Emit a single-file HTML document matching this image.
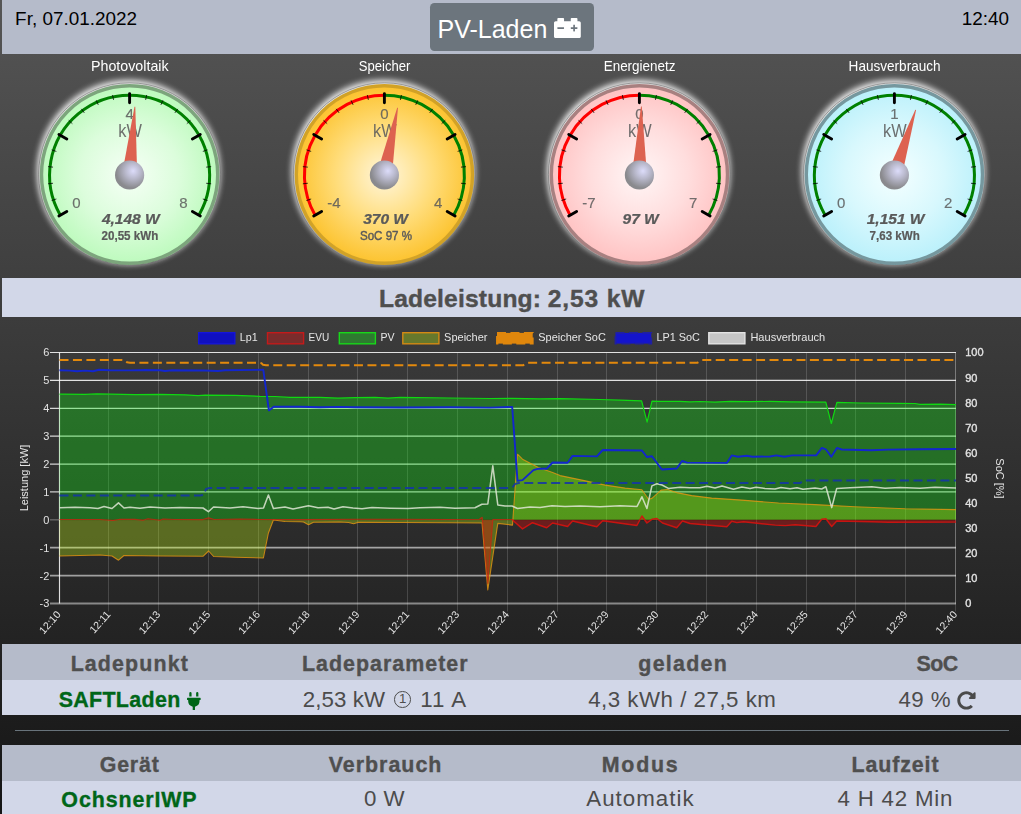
<!DOCTYPE html>
<html lang="de">
<head>
<meta charset="utf-8">
<title>openWB</title>
<style>
html,body{margin:0;padding:0}
body{width:1021px;height:814px;overflow:hidden;position:relative;
 background:linear-gradient(to bottom,#555555 0px,#151515 814px);
 font-family:"Liberation Sans", sans-serif;color:#4d4d4d}
.abs{position:absolute}
.band{position:absolute;left:2px;right:0}
.hdr{top:0;height:54px;background:#b5bbca}
.date{position:absolute;left:13.1px;top:8.2px;font-size:18.9px;line-height:22px;color:#000;white-space:nowrap}
.clock{position:absolute;right:11.9px;top:8.2px;font-size:18.9px;line-height:22px;color:#000;white-space:nowrap}
.btn{position:absolute;left:430px;top:3px;width:164px;height:48px;border-radius:4.5px;background:#6c757d;color:#fff;
 font-size:25px;line-height:48px;white-space:nowrap}
.btn span{position:absolute;left:7.5px;top:2.2px}
.btn .ico{position:absolute;left:124px;top:14.6px}
.lade{top:278px;height:39px;background:#d2d7e8;text-align:center;font-weight:bold;font-size:24.6px;line-height:39px;color:#4f4f4f;white-space:nowrap;letter-spacing:0.35px;-webkit-text-stroke:0.4px #4f4f4f}
.lade span{position:relative;top:0.9px;left:0.5px}
.th{background:#b5bbca;height:36px;font-weight:bold;font-size:23px;line-height:36px;color:#4f4f4f}
.tr{background:#d2d7e8;height:35px;font-size:22.5px;line-height:35px;color:#4c4c4c}
.row{position:absolute;left:2px;right:0;white-space:nowrap}
.cell{position:absolute;top:0;height:100%;text-align:center;transform:translateX(-50%);white-space:nowrap}
.tx{position:absolute;white-space:nowrap;line-height:30px}
.hb{font-weight:bold;font-size:21.4px;color:#4f4f4f;-webkit-text-stroke:0.35px #4f4f4f}
.gb{font-weight:bold;font-size:21.4px;color:#006618;-webkit-text-stroke:0.35px #006618}
.rt{font-size:22.3px;color:#4c4c4c}
.lb{font-weight:bold;font-size:24.6px;color:#4f4f4f;-webkit-text-stroke:0.4px #4f4f4f}
.ico{display:inline-block;vertical-align:baseline}
.circ{display:inline-block;box-sizing:border-box;width:16.6px;height:16.6px;border:1.4px solid #4c4c4c;border-radius:50%;
 font-size:13.2px;line-height:14px;text-align:center;vertical-align:baseline;position:relative;top:-0.6px;margin:0 3.2px 0 2.6px}
hr.sep{position:absolute;left:15px;width:994px;top:730px;height:1px;margin:0;border:0;background:#68737b}
</style>
</head>
<body>
<div class="band hdr">
  <div class="date">Fr, 07.01.2022</div>
  <div class="clock">12:40</div>
</div>
<div class="btn"><span>PV-Laden</span><svg class="ico" width="26.8" height="20.1" viewBox="0 64 512 384"><path fill="#fff" d="M480 128h-32V80c0-8.840-7.160-16-16-16h-96c-8.840 0-16 7.160-16 16v48H192V80c0-8.840-7.160-16-16-16H80c-8.840 0-16 7.160-16 16v48H32c-17.670 0-32 14.330-32 32v256c0 17.670 14.330 32 32 32h448c17.670 0 32-14.330 32-32V160c0-17.670-14.330-32-32-32zM192 264c0 4.420-3.580 8-8 8H72c-4.420 0-8-3.580-8-8v-16c0-4.420 3.580-8 8-8h112c4.420 0 8 3.580 8 8v16zm256 0c0 4.420-3.580 8-8 8h-40v40c0 4.420-3.580 8-8 8h-16c-4.420 0-8-3.580-8-8v-40h-40c-4.420 0-8-3.580-8-8v-16c0-4.420 3.580-8 8-8h40v-40c0-4.420 3.580-8 8-8h16c4.420 0 8 3.580 8 8v40h40c4.420 0 8 3.580 8 8v16z"/></svg></div>
<svg class="abs" style="left:0;top:0;will-change:transform" width="1021" height="280" viewBox="0 0 1021 280" font-family='"Liberation Sans", sans-serif'><defs><filter id="glow" x="-20%" y="-20%" width="140%" height="140%"><feGaussianBlur stdDeviation="3.4"/></filter></defs><radialGradient id="g1" cx="129.6" cy="175.0" r="90.0" gradientUnits="userSpaceOnUse"><stop offset="0" stop-color="#f6fff6"/><stop offset="0.55" stop-color="#dcfddc"/><stop offset="1" stop-color="#bcfabc"/></radialGradient>
<ellipse cx="128.6" cy="172.1" rx="91.6" ry="92.2" fill="#fff" opacity="0.95" filter="url(#glow)"/>
<ellipse cx="129.6" cy="174.5" rx="91.0" ry="91.7" fill="none" stroke="#707070" stroke-width="0.8" opacity="0.75"/>
<ellipse cx="129.6" cy="174.5" rx="89.8" ry="90.5" fill="url(#g1)"/>
<ellipse cx="129.6" cy="174.5" rx="88.1" ry="88.8" fill="none" stroke="rgba(0,0,0,0.34)" stroke-width="3.4"/>
<path d="M60.32 215.20 A80 80 0 1 1 198.88 215.20" fill="none" stroke="#008000" stroke-width="3"/>
<path d="M51.61 200.54L56.37 198.99M48.05 183.77L53.02 183.25M48.05 166.63L53.02 167.15M51.61 149.86L56.37 151.41M68.66 120.33L72.38 123.68M81.40 108.86L84.34 112.91M96.25 100.29L98.28 104.86M112.55 94.99L113.59 99.88M146.65 94.99L145.61 99.88M162.95 100.29L160.92 104.86M177.80 108.86L174.86 112.91M190.54 120.33L186.82 123.68M207.59 149.86L202.83 151.41M211.15 166.63L206.18 167.15M211.15 183.77L206.18 183.25M207.59 200.54L202.83 198.99" stroke="rgba(0,0,0,0.75)" stroke-width="1" fill="none"/>
<path d="M58.93 216.00L66.81 211.45M58.93 134.40L66.81 138.95M129.60 93.60L129.60 102.70M200.27 134.40L192.39 138.95M200.27 216.00L192.39 211.45" stroke="#000" stroke-width="2.9" stroke-linecap="round" fill="none"/>
<text x="76.3" y="207.8" font-size="15.0" fill="#5a5a5a" fill-opacity="0.85" stroke="#5a5a5a" stroke-opacity="0.85" stroke-width="0.15" text-anchor="middle">0</text>
<text x="129.6" y="119.3" font-size="15.0" fill="#5a5a5a" fill-opacity="0.85" stroke="#5a5a5a" stroke-opacity="0.85" stroke-width="0.15" text-anchor="middle">4</text>
<text x="183.4" y="207.8" font-size="15.0" fill="#5a5a5a" fill-opacity="0.85" stroke="#5a5a5a" stroke-opacity="0.85" stroke-width="0.15" text-anchor="middle">8</text>
<text x="130.1" y="136.9" font-size="17.5" fill="#5c5c5c" fill-opacity="0.88" text-anchor="middle" textLength="23.6" lengthAdjust="spacingAndGlyphs">kW</text>
<text transform="translate(130.79999999999998 224.3) scale(1.085 1)" font-size="14.3" font-weight="bold" font-style="italic" fill="#5a5a5a" stroke="#5a5a5a" stroke-width="0.25" text-anchor="middle">4,148 W</text>
<text transform="translate(129.9 239.5) scale(1 1.03)" font-size="11.6" font-weight="bold" fill="#5a5a5a" stroke="#5a5a5a" stroke-width="0.2" text-anchor="middle">20,55 kWh</text>
<g transform="translate(129.6 175.0) rotate(364.44)"><path d="M-7.6 0 L-0.4 -68.5 L0.4 -68.5 L7.6 0 Z" fill="#dd6250"/></g>
<radialGradient id="h1" cx="133.1" cy="171.0" r="17" gradientUnits="userSpaceOnUse"><stop offset="0" stop-color="#dcdcfa"/><stop offset="0.45" stop-color="#b9b9cc"/><stop offset="1" stop-color="#8a8a8e"/></radialGradient>
<circle cx="129.6" cy="175.0" r="14.6" fill="url(#h1)"/>
<text x="129.79999999999998" y="70.7" font-size="13.9" fill="#fff" text-anchor="middle" textLength="77.6" lengthAdjust="spacingAndGlyphs">Photovoltaik</text>
<radialGradient id="g2" cx="384.4" cy="175.0" r="90.0" gradientUnits="userSpaceOnUse"><stop offset="0" stop-color="#fff6dc"/><stop offset="0.55" stop-color="#ffdc78"/><stop offset="1" stop-color="#fcc22c"/></radialGradient>
<ellipse cx="383.4" cy="172.1" rx="91.6" ry="92.2" fill="#fff" opacity="0.95" filter="url(#glow)"/>
<ellipse cx="384.4" cy="174.5" rx="91.0" ry="91.7" fill="none" stroke="#707070" stroke-width="0.8" opacity="0.75"/>
<ellipse cx="384.4" cy="174.5" rx="89.8" ry="90.5" fill="url(#g2)"/>
<ellipse cx="384.4" cy="174.5" rx="88.1" ry="88.8" fill="none" stroke="rgba(0,0,0,0.17)" stroke-width="3.4"/>
<path d="M315.12 215.20 A80 80 0 0 1 384.40 95.20" fill="none" stroke="#ff0000" stroke-width="3"/>
<path d="M384.40 95.20 A80 80 0 0 1 453.68 215.20" fill="none" stroke="#008000" stroke-width="3"/>
<path d="M306.41 200.54L311.17 198.99M302.85 183.77L307.82 183.25M302.85 166.63L307.82 167.15M306.41 149.86L311.17 151.41M323.46 120.33L327.18 123.68M336.20 108.86L339.14 112.91M351.05 100.29L353.08 104.86M367.35 94.99L368.39 99.88M401.45 94.99L400.41 99.88M417.75 100.29L415.72 104.86M432.60 108.86L429.66 112.91M445.34 120.33L441.62 123.68M462.39 149.86L457.63 151.41M465.95 166.63L460.98 167.15M465.95 183.77L460.98 183.25M462.39 200.54L457.63 198.99" stroke="rgba(0,0,0,0.75)" stroke-width="1" fill="none"/>
<path d="M313.73 216.00L321.61 211.45M313.73 134.40L321.61 138.95M384.40 93.60L384.40 102.70M455.07 134.40L447.19 138.95M455.07 216.00L447.19 211.45" stroke="#000" stroke-width="2.9" stroke-linecap="round" fill="none"/>
<text x="334.0" y="207.8" font-size="15.0" fill="#5a5a5a" fill-opacity="0.85" stroke="#5a5a5a" stroke-opacity="0.85" stroke-width="0.15" text-anchor="middle">-4</text>
<text x="384.4" y="119.3" font-size="15.0" fill="#5a5a5a" fill-opacity="0.85" stroke="#5a5a5a" stroke-opacity="0.85" stroke-width="0.15" text-anchor="middle">0</text>
<text x="438.2" y="207.8" font-size="15.0" fill="#5a5a5a" fill-opacity="0.85" stroke="#5a5a5a" stroke-opacity="0.85" stroke-width="0.15" text-anchor="middle">4</text>
<text x="384.9" y="136.9" font-size="17.5" fill="#5c5c5c" fill-opacity="0.88" text-anchor="middle" textLength="23.6" lengthAdjust="spacingAndGlyphs">kW</text>
<text transform="translate(385.59999999999997 224.3) scale(1.085 1)" font-size="14.3" font-weight="bold" font-style="italic" fill="#5a5a5a" stroke="#5a5a5a" stroke-width="0.25" text-anchor="middle">370 W</text>
<text transform="translate(386.0 239.5) scale(1 1.03)" font-size="11.6" font-weight="normal" fill="#5a5a5a" stroke="#5a5a5a" stroke-width="0.4" text-anchor="middle">SoC 97 %</text>
<g transform="translate(384.4 175.0) rotate(371.10)"><path d="M-7.6 0 L-0.4 -68.5 L0.4 -68.5 L7.6 0 Z" fill="#dd6250"/></g>
<radialGradient id="h2" cx="387.9" cy="171.0" r="17" gradientUnits="userSpaceOnUse"><stop offset="0" stop-color="#dcdcfa"/><stop offset="0.45" stop-color="#b9b9cc"/><stop offset="1" stop-color="#8a8a8e"/></radialGradient>
<circle cx="384.4" cy="175.0" r="14.6" fill="url(#h2)"/>
<text x="384.59999999999997" y="70.7" font-size="13.9" fill="#fff" text-anchor="middle" textLength="51.6" lengthAdjust="spacingAndGlyphs">Speicher</text>
<radialGradient id="g3" cx="639.4" cy="175.0" r="90.0" gradientUnits="userSpaceOnUse"><stop offset="0" stop-color="#fff6f6"/><stop offset="0.55" stop-color="#ffdddd"/><stop offset="1" stop-color="#ffc2c2"/></radialGradient>
<ellipse cx="638.4" cy="172.1" rx="91.6" ry="92.2" fill="#fff" opacity="0.95" filter="url(#glow)"/>
<ellipse cx="639.4" cy="174.5" rx="91.0" ry="91.7" fill="none" stroke="#707070" stroke-width="0.8" opacity="0.75"/>
<ellipse cx="639.4" cy="174.5" rx="89.8" ry="90.5" fill="url(#g3)"/>
<ellipse cx="639.4" cy="174.5" rx="88.1" ry="88.8" fill="none" stroke="rgba(0,0,0,0.34)" stroke-width="3.4"/>
<path d="M570.12 215.20 A80 80 0 0 1 639.40 95.20" fill="none" stroke="#ff0000" stroke-width="3"/>
<path d="M639.40 95.20 A80 80 0 0 1 708.68 215.20" fill="none" stroke="#008000" stroke-width="3"/>
<path d="M561.41 200.54L566.17 198.99M557.85 183.77L562.82 183.25M557.85 166.63L562.82 167.15M561.41 149.86L566.17 151.41M578.46 120.33L582.18 123.68M591.20 108.86L594.14 112.91M606.05 100.29L608.08 104.86M622.35 94.99L623.39 99.88M656.45 94.99L655.41 99.88M672.75 100.29L670.72 104.86M687.60 108.86L684.66 112.91M700.34 120.33L696.62 123.68M717.39 149.86L712.63 151.41M720.95 166.63L715.98 167.15M720.95 183.77L715.98 183.25M717.39 200.54L712.63 198.99" stroke="rgba(0,0,0,0.75)" stroke-width="1" fill="none"/>
<path d="M568.73 216.00L576.61 211.45M568.73 134.40L576.61 138.95M639.40 93.60L639.40 102.70M710.07 134.40L702.19 138.95M710.07 216.00L702.19 211.45" stroke="#000" stroke-width="2.9" stroke-linecap="round" fill="none"/>
<text x="589.0" y="207.8" font-size="15.0" fill="#5a5a5a" fill-opacity="0.85" stroke="#5a5a5a" stroke-opacity="0.85" stroke-width="0.15" text-anchor="middle">-7</text>
<text x="639.4" y="119.3" font-size="15.0" fill="#5a5a5a" fill-opacity="0.85" stroke="#5a5a5a" stroke-opacity="0.85" stroke-width="0.15" text-anchor="middle">0</text>
<text x="693.2" y="207.8" font-size="15.0" fill="#5a5a5a" fill-opacity="0.85" stroke="#5a5a5a" stroke-opacity="0.85" stroke-width="0.15" text-anchor="middle">7</text>
<text x="639.9" y="136.9" font-size="17.5" fill="#5c5c5c" fill-opacity="0.88" text-anchor="middle" textLength="23.6" lengthAdjust="spacingAndGlyphs">kW</text>
<text transform="translate(640.6 224.3) scale(1.085 1)" font-size="14.3" font-weight="bold" font-style="italic" fill="#5a5a5a" stroke="#5a5a5a" stroke-width="0.25" text-anchor="middle">97 W</text>
<g transform="translate(639.4 175.0) rotate(361.66)"><path d="M-7.6 0 L-0.4 -68.5 L0.4 -68.5 L7.6 0 Z" fill="#dd6250"/></g>
<radialGradient id="h3" cx="642.9" cy="171.0" r="17" gradientUnits="userSpaceOnUse"><stop offset="0" stop-color="#dcdcfa"/><stop offset="0.45" stop-color="#b9b9cc"/><stop offset="1" stop-color="#8a8a8e"/></radialGradient>
<circle cx="639.4" cy="175.0" r="14.6" fill="url(#h3)"/>
<text x="639.6" y="70.7" font-size="13.9" fill="#fff" text-anchor="middle" textLength="71.8" lengthAdjust="spacingAndGlyphs">Energienetz</text>
<radialGradient id="g4" cx="894.4" cy="175.0" r="90.0" gradientUnits="userSpaceOnUse"><stop offset="0" stop-color="#f4ffff"/><stop offset="0.55" stop-color="#d8f8fd"/><stop offset="1" stop-color="#b9f0fb"/></radialGradient>
<ellipse cx="893.4" cy="172.1" rx="91.6" ry="92.2" fill="#fff" opacity="0.95" filter="url(#glow)"/>
<ellipse cx="894.4" cy="174.5" rx="91.0" ry="91.7" fill="none" stroke="#707070" stroke-width="0.8" opacity="0.75"/>
<ellipse cx="894.4" cy="174.5" rx="89.8" ry="90.5" fill="url(#g4)"/>
<ellipse cx="894.4" cy="174.5" rx="88.1" ry="88.8" fill="none" stroke="rgba(0,0,0,0.37)" stroke-width="3.4"/>
<path d="M825.12 215.20 A80 80 0 1 1 963.68 215.20" fill="none" stroke="#008000" stroke-width="3"/>
<path d="M816.41 200.54L821.17 198.99M812.85 183.77L817.82 183.25M812.85 166.63L817.82 167.15M816.41 149.86L821.17 151.41M833.46 120.33L837.18 123.68M846.20 108.86L849.14 112.91M861.05 100.29L863.08 104.86M877.35 94.99L878.39 99.88M911.45 94.99L910.41 99.88M927.75 100.29L925.72 104.86M942.60 108.86L939.66 112.91M955.34 120.33L951.62 123.68M972.39 149.86L967.63 151.41M975.95 166.63L970.98 167.15M975.95 183.77L970.98 183.25M972.39 200.54L967.63 198.99" stroke="rgba(0,0,0,0.75)" stroke-width="1" fill="none"/>
<path d="M823.73 216.00L831.61 211.45M823.73 134.40L831.61 138.95M894.40 93.60L894.40 102.70M965.07 134.40L957.19 138.95M965.07 216.00L957.19 211.45" stroke="#000" stroke-width="2.9" stroke-linecap="round" fill="none"/>
<text x="841.1" y="207.8" font-size="15.0" fill="#5a5a5a" fill-opacity="0.85" stroke="#5a5a5a" stroke-opacity="0.85" stroke-width="0.15" text-anchor="middle">0</text>
<text x="894.4" y="119.3" font-size="15.0" fill="#5a5a5a" fill-opacity="0.85" stroke="#5a5a5a" stroke-opacity="0.85" stroke-width="0.15" text-anchor="middle">1</text>
<text x="948.2" y="207.8" font-size="15.0" fill="#5a5a5a" fill-opacity="0.85" stroke="#5a5a5a" stroke-opacity="0.85" stroke-width="0.15" text-anchor="middle">2</text>
<text x="894.9" y="136.9" font-size="17.5" fill="#5c5c5c" fill-opacity="0.88" text-anchor="middle" textLength="23.6" lengthAdjust="spacingAndGlyphs">kW</text>
<text transform="translate(895.6 224.3) scale(1.085 1)" font-size="14.3" font-weight="bold" font-style="italic" fill="#5a5a5a" stroke="#5a5a5a" stroke-width="0.25" text-anchor="middle">1,151 W</text>
<text transform="translate(894.6999999999999 239.5) scale(1 1.03)" font-size="11.6" font-weight="bold" fill="#5a5a5a" stroke="#5a5a5a" stroke-width="0.2" text-anchor="middle">7,63 kWh</text>
<g transform="translate(894.4 175.0) rotate(378.12)"><path d="M-7.6 0 L-0.4 -68.5 L0.4 -68.5 L7.6 0 Z" fill="#dd6250"/></g>
<radialGradient id="h4" cx="897.9" cy="171.0" r="17" gradientUnits="userSpaceOnUse"><stop offset="0" stop-color="#dcdcfa"/><stop offset="0.45" stop-color="#b9b9cc"/><stop offset="1" stop-color="#8a8a8e"/></radialGradient>
<circle cx="894.4" cy="175.0" r="14.6" fill="url(#h4)"/>
<text x="894.6" y="70.7" font-size="13.9" fill="#fff" text-anchor="middle" textLength="92.0" lengthAdjust="spacingAndGlyphs">Hausverbrauch</text></svg>
<div class="band lade"></div>
<svg class="abs" style="left:0;top:318px;will-change:transform" width="1021" height="326" viewBox="0 318 1021 326" font-family='"Liberation Sans", sans-serif' font-size="11">
<path d="M108.5 352.5V611.5M158.5 352.5V611.5M208.5 352.5V611.5M258.5 352.5V611.5M308.5 352.5V611.5M357.5 352.5V611.5M407.5 352.5V611.5M457.5 352.5V611.5M507.5 352.5V611.5M557.5 352.5V611.5M606.5 352.5V611.5M656.5 352.5V611.5M706.5 352.5V611.5M756.5 352.5V611.5M806.5 352.5V611.5M855.5 352.5V611.5M905.5 352.5V611.5M955.5 352.5V611.5" stroke="rgba(255,255,255,0.155)" stroke-width="1" fill="none"/>
<path d="M955.5 352.5V603.5" stroke="rgba(255,255,255,0.22)" stroke-width="1" fill="none"/>
<path d="M50.0 352.50H956.0" stroke="rgba(255,255,255,0.85)" stroke-width="1.15" fill="none"/>
<path d="M50.0 380.39H956.0" stroke="rgba(255,255,255,0.85)" stroke-width="1.2" fill="none"/>
<path d="M50.0 408.28H956.0" stroke="rgba(255,255,255,0.8)" stroke-width="1.25" fill="none"/>
<path d="M50.0 436.17H956.0" stroke="rgba(255,255,255,0.8)" stroke-width="1.25" fill="none"/>
<path d="M50.0 464.06H956.0" stroke="rgba(255,255,255,0.78)" stroke-width="1.3" fill="none"/>
<path d="M50.0 491.94H956.0" stroke="rgba(255,255,255,0.76)" stroke-width="1.3" fill="none"/>
<path d="M50.0 519.83H59.5" stroke="rgba(255,255,255,0.3)" stroke-width="1.3" fill="none"/>
<path d="M59.5 519.83H956.0" stroke="rgba(0,0,0,0.25)" stroke-width="1.2" fill="none"/>
<path d="M50.0 547.72H956.0" stroke="rgba(255,255,255,0.58)" stroke-width="1.75" fill="none"/>
<path d="M50.0 575.61H956.0" stroke="rgba(255,255,255,0.56)" stroke-width="1.8" fill="none"/>
<path d="M50.0 603.50H956.0" stroke="rgba(255,255,255,0.46)" stroke-width="1.8" fill="none"/>
<path d="M59.5 352.5V603.5" stroke="rgba(255,255,255,0.85)" stroke-width="1.15" fill="none"/>
<polygon points="59.5,519.8 59.5,394.2 85.0,394.4 97.0,393.9 110.0,394.2 135.0,394.6 160.0,394.4 185.0,394.8 198.0,395.6 205.0,395.2 235.0,395.4 260.0,396.3 275.0,396.5 290.0,397.4 320.0,397.3 338.0,398.2 355.0,397.6 375.0,397.3 388.0,398.1 400.0,397.4 450.0,398.0 490.0,398.5 513.0,398.4 540.0,398.9 560.0,398.6 600.0,399.5 620.0,400.2 641.6,400.8 647.1,422.2 652.0,401.1 660.0,401.4 680.0,401.3 690.0,401.9 700.0,401.5 715.0,402.1 730.0,401.3 750.0,401.6 770.0,401.4 790.0,401.8 825.8,402.2 831.3,423.5 836.9,402.4 860.0,403.0 900.0,403.3 915.0,403.5 920.0,404.3 940.0,404.1 956.0,404.6 956.0,519.8" fill="rgba(10,255,13,0.3)"/>
<polygon points="59.5,519.8 59.5,556.0 80.0,555.5 100.0,555.0 112.0,556.0 118.5,560.2 124.0,555.5 160.0,556.0 203.0,556.3 208.6,551.0 213.6,556.5 235.0,557.2 263.4,558.0 268.4,533.0 273.4,520.0 285.0,521.5 300.0,521.8 303.5,522.0 308.5,524.8 313.5,522.3 340.0,522.0 348.6,522.5 353.6,523.8 358.6,522.3 400.0,522.5 450.0,522.8 482.0,523.0 487.8,589.9 492.8,556.5 497.8,523.4 512.5,525.1 517.5,454.2 522.5,459.2 538.4,467.5 552.6,472.6 560.1,475.6 581.8,480.1 605.2,485.1 625.2,488.1 641.9,489.8 648.6,499.3 651.9,498.4 661.1,490.1 667.5,489.6 676.7,492.6 691.7,495.6 711.8,498.1 741.8,500.1 778.6,503.0 815.0,504.6 855.0,506.8 905.0,508.8 956.0,509.6 956.0,519.8" fill="rgba(200,255,13,0.3)"/>
<polygon points="59.5,519.8 59.5,519.5 100.0,519.5 113.0,520.5 120.0,519.2 135.0,519.4 143.0,520.3 148.0,518.8 160.0,520.2 163.0,519.0 175.0,519.5 203.0,519.6 208.6,517.8 214.0,519.5 240.0,519.0 260.0,519.5 300.0,519.6 355.0,519.3 400.0,519.3 450.0,519.5 479.4,519.3 482.2,517.3 487.8,583.5 492.8,519.6 512.5,519.5 513.3,520.7 522.5,528.9 532.5,522.7 546.7,527.7 552.6,523.0 567.6,526.5 572.6,521.0 596.8,526.8 602.7,520.7 636.9,525.5 641.9,516.0 646.9,523.0 651.9,519.3 656.9,518.5 662.5,523.0 676.7,527.7 682.5,521.0 690.0,523.5 726.8,526.8 731.8,521.3 736.8,522.6 743.5,521.8 775.2,525.1 785.2,525.6 795.2,524.8 815.9,526.5 821.7,519.3 825.9,518.8 831.7,526.5 836.7,521.0 871.8,521.8 888.5,522.3 956.0,522.1 956.0,519.8" fill="rgba(255,0,0,0.3)"/>
<polyline points="59.5,394.2 85.0,394.4 97.0,393.9 110.0,394.2 135.0,394.6 160.0,394.4 185.0,394.8 198.0,395.6 205.0,395.2 235.0,395.4 260.0,396.3 275.0,396.5 290.0,397.4 320.0,397.3 338.0,398.2 355.0,397.6 375.0,397.3 388.0,398.1 400.0,397.4 450.0,398.0 490.0,398.5 513.0,398.4 540.0,398.9 560.0,398.6 600.0,399.5 620.0,400.2 641.6,400.8 647.1,422.2 652.0,401.1 660.0,401.4 680.0,401.3 690.0,401.9 700.0,401.5 715.0,402.1 730.0,401.3 750.0,401.6 770.0,401.4 790.0,401.8 825.8,402.2 831.3,423.5 836.9,402.4 860.0,403.0 900.0,403.3 915.0,403.5 920.0,404.3 940.0,404.1 956.0,404.6" fill="none" stroke="#10d812" stroke-width="1.2" stroke-linejoin="round"/>
<polyline points="59.5,556.0 80.0,555.5 100.0,555.0 112.0,556.0 118.5,560.2 124.0,555.5 160.0,556.0 203.0,556.3 208.6,551.0 213.6,556.5 235.0,557.2 263.4,558.0 268.4,533.0 273.4,520.0 285.0,521.5 300.0,521.8 303.5,522.0 308.5,524.8 313.5,522.3 340.0,522.0 348.6,522.5 353.6,523.8 358.6,522.3 400.0,522.5 450.0,522.8 482.0,523.0 487.8,589.9 492.8,556.5 497.8,523.4 512.5,525.1 517.5,454.2 522.5,459.2 538.4,467.5 552.6,472.6 560.1,475.6 581.8,480.1 605.2,485.1 625.2,488.1 641.9,489.8 648.6,499.3 651.9,498.4 661.1,490.1 667.5,489.6 676.7,492.6 691.7,495.6 711.8,498.1 741.8,500.1 778.6,503.0 815.0,504.6 855.0,506.8 905.0,508.8 956.0,509.6" fill="none" stroke="rgba(235,150,18,0.78)" stroke-width="1.1" stroke-linejoin="round"/>
<polyline points="59.5,519.5 100.0,519.5 113.0,520.5 120.0,519.2 135.0,519.4 143.0,520.3 148.0,518.8 160.0,520.2 163.0,519.0 175.0,519.5 203.0,519.6 208.6,517.8 214.0,519.5 240.0,519.0 260.0,519.5 300.0,519.6 355.0,519.3 400.0,519.3 450.0,519.5 479.4,519.3 482.2,517.3 487.8,583.5 492.8,519.6 512.5,519.5" fill="none" stroke="rgba(205,35,15,0.75)" stroke-width="1.1" stroke-linejoin="round"/>
<polyline points="512.5,519.5 513.3,520.7 522.5,528.9 532.5,522.7 546.7,527.7 552.6,523.0 567.6,526.5 572.6,521.0 596.8,526.8 602.7,520.7 636.9,525.5 641.9,516.0 646.9,523.0 651.9,519.3 656.9,518.5 662.5,523.0 676.7,527.7 682.5,521.0 690.0,523.5 726.8,526.8 731.8,521.3 736.8,522.6 743.5,521.8 775.2,525.1 785.2,525.6 795.2,524.8 815.9,526.5 821.7,519.3 825.9,518.8 831.7,526.5 836.7,521.0 871.8,521.8 888.5,522.3 956.0,522.1" fill="none" stroke="rgba(214,18,14,0.9)" stroke-width="1.45" stroke-linejoin="round"/>
<polyline points="59.5,507.8 75.0,507.2 90.0,507.8 98.0,508.5 104.0,506.5 112.0,508.5 118.5,502.9 124.0,508.0 130.0,507.2 140.0,508.3 150.0,507.0 165.0,508.0 180.0,507.5 203.0,508.0 208.4,511.7 213.5,507.0 230.0,508.0 243.0,506.8 258.0,508.4 263.5,508.0 268.4,495.0 273.4,508.6 285.0,507.0 293.0,509.0 308.5,505.8 318.0,507.8 328.0,507.2 334.0,509.0 343.0,506.8 353.0,508.0 362.0,508.8 372.0,507.5 390.0,508.2 408.0,508.6 420.0,507.8 440.0,507.3 455.0,508.2 475.0,507.8 481.9,504.2 487.8,504.0 492.8,465.8 497.8,505.0 505.0,506.0 512.0,506.0 517.5,508.5 530.0,507.0 540.0,507.6 552.0,505.8 565.0,506.5 580.0,506.0 600.0,506.8 620.0,505.8 637.0,506.5 641.9,496.8 646.9,508.5 651.9,485.9 656.9,483.8 662.0,485.0 668.4,488.4 680.0,487.2 690.0,487.8 700.0,487.8 707.0,486.2 715.0,488.0 722.0,486.0 733.5,489.3 741.8,487.1 750.0,488.6 756.0,487.3 765.0,488.4 775.0,489.0 781.0,487.6 790.0,488.7 797.0,487.8 803.0,489.2 815.0,488.0 821.7,489.0 825.9,486.8 831.7,507.6 836.7,488.4 850.0,487.8 871.8,486.8 885.0,488.2 900.0,487.6 920.0,488.2 935.0,487.2 956.0,487.9" fill="none" stroke="rgba(226,232,216,0.84)" stroke-width="1.55" stroke-linejoin="round"/>
<polyline points="59.5,495.6 200.0,495.6 203.5,495.0 206.0,489.0 209.5,487.9 508.0,487.9 512.5,487.3 515.0,484.0 518.4,483.1 800.3,483.1 802.5,481.2 806.1,480.4 956.0,480.4" fill="none" stroke="rgba(20,52,172,0.85)" stroke-width="2" stroke-dasharray="9 4.45" stroke-linejoin="round"/>
<polyline points="59.5,360.1 122.0,360.1 125.5,360.6 127.0,362.2 130.0,362.8 259.3,362.8 261.5,363.3 263.0,364.7 266.0,365.2 523.4,365.2 527.4,362.8 697.3,362.8 702.1,360.1 956.0,360.1" fill="none" stroke="#e3890c" stroke-width="2" stroke-dasharray="9 4.45" stroke-linejoin="round"/>
<polyline points="59.5,370.3 70.0,370.6 77.0,371.3 85.0,370.6 93.0,371.2 99.0,369.8 110.0,370.3 130.0,370.4 145.0,370.0 160.0,370.3 165.0,371.0 172.0,370.2 205.0,370.5 218.0,371.0 225.0,370.2 263.3,369.8 268.9,410.4 273.7,406.7 300.0,406.8 320.0,407.2 340.0,406.9 355.0,407.2 400.0,407.5 450.0,407.2 490.0,407.6 512.2,407.0 517.5,480.9 522.5,480.1 533.4,470.1 538.4,468.7 546.7,468.7 552.6,462.5 567.6,462.7 572.6,455.9 596.8,456.4 602.7,450.0 641.9,450.5 646.9,457.0 651.9,456.2 661.9,469.5 676.6,468.5 682.1,461.0 687.0,462.6 726.9,462.9 731.7,455.4 738.0,456.7 746.8,455.7 752.4,456.7 770.0,456.5 776.4,455.4 784.3,456.7 792.3,455.4 816.2,455.4 821.8,447.9 825.8,449.3 831.3,456.7 836.9,447.9 841.7,449.5 871.3,450.3 888.0,449.6 920.0,449.3 956.0,449.0" fill="none" stroke="#1226cf" stroke-width="1.9" stroke-linejoin="round"/>
<rect x="198.7" y="332.7" width="36.1" height="11.1" fill="#1010c0" stroke="#1515d8" stroke-width="1.4"/>
<text x="239.8" y="341.2" fill="#e6e6e6" textLength="17.9" lengthAdjust="spacingAndGlyphs">Lp1</text>
<rect x="267.5" y="332.7" width="36.1" height="11.1" fill="#7a2c2c" stroke="#c41a1a" stroke-width="1.4"/>
<text x="308.6" y="341.2" fill="#e6e6e6" textLength="20.6" lengthAdjust="spacingAndGlyphs">EVU</text>
<rect x="339.3" y="332.7" width="36.1" height="11.1" fill="#2e7a30" stroke="#18d81a" stroke-width="1.4"/>
<text x="380.5" y="341.2" fill="#e6e6e6" textLength="14.1" lengthAdjust="spacingAndGlyphs">PV</text>
<rect x="402.8" y="332.7" width="36.1" height="11.1" fill="#66782c" stroke="#d48a14" stroke-width="1.4"/>
<text x="444.1" y="341.2" fill="#e6e6e6" textLength="43.4" lengthAdjust="spacingAndGlyphs">Speicher</text>
<rect x="497.0" y="332.9" width="35.7" height="10.7" fill="#e0870c"/>
<rect x="497.0" y="332.9" width="35.7" height="10.7" fill="none" stroke="#e0870c" stroke-width="1.9" stroke-dasharray="9 4.45"/>
<text x="538.3" y="341.2" fill="#e6e6e6" textLength="67.5" lengthAdjust="spacingAndGlyphs">Speicher SoC</text>
<rect x="615.5" y="332.9" width="35.7" height="10.7" fill="#1414cc"/>
<rect x="615.5" y="332.9" width="35.7" height="10.7" fill="none" stroke="#2020a0" stroke-width="1.9" stroke-dasharray="9 4.45"/>
<text x="656.4" y="341.2" fill="#e6e6e6" textLength="43.5" lengthAdjust="spacingAndGlyphs">LP1 SoC</text>
<rect x="708.8000000000001" y="332.7" width="36.1" height="11.1" fill="#c6c6c6" stroke="#e4e4e4" stroke-width="1.4"/>
<text x="750.4" y="341.2" fill="#e6e6e6" textLength="74.8" lengthAdjust="spacingAndGlyphs">Hausverbrauch</text>
<text x="49.4" y="356.4" fill="#e2e2e2" text-anchor="end">6</text>
<text x="49.4" y="384.3" fill="#e2e2e2" text-anchor="end">5</text>
<text x="49.4" y="412.2" fill="#e2e2e2" text-anchor="end">4</text>
<text x="49.4" y="440.1" fill="#e2e2e2" text-anchor="end">3</text>
<text x="49.4" y="468.0" fill="#e2e2e2" text-anchor="end">2</text>
<text x="49.4" y="495.8" fill="#e2e2e2" text-anchor="end">1</text>
<text x="49.4" y="523.7" fill="#e2e2e2" text-anchor="end">0</text>
<text x="49.4" y="551.6" fill="#e2e2e2" text-anchor="end">-1</text>
<text x="49.4" y="579.5" fill="#e2e2e2" text-anchor="end">-2</text>
<text x="49.4" y="607.4" fill="#e2e2e2" text-anchor="end">-3</text>
<text x="965.2" y="356.4" fill="#e2e2e2" stroke="#e2e2e2" stroke-width="0.35">100</text>
<text x="965.2" y="381.5" fill="#e2e2e2" stroke="#e2e2e2" stroke-width="0.35">90</text>
<text x="965.2" y="406.6" fill="#e2e2e2" stroke="#e2e2e2" stroke-width="0.35">80</text>
<text x="965.2" y="431.7" fill="#e2e2e2" stroke="#e2e2e2" stroke-width="0.35">70</text>
<text x="965.2" y="456.8" fill="#e2e2e2" stroke="#e2e2e2" stroke-width="0.35">60</text>
<text x="965.2" y="481.9" fill="#e2e2e2" stroke="#e2e2e2" stroke-width="0.35">50</text>
<text x="965.2" y="507.0" fill="#e2e2e2" stroke="#e2e2e2" stroke-width="0.35">40</text>
<text x="965.2" y="532.1" fill="#e2e2e2" stroke="#e2e2e2" stroke-width="0.35">30</text>
<text x="965.2" y="557.2" fill="#e2e2e2" stroke="#e2e2e2" stroke-width="0.35">20</text>
<text x="965.2" y="582.3" fill="#e2e2e2" stroke="#e2e2e2" stroke-width="0.35">10</text>
<text x="965.2" y="607.4" fill="#e2e2e2" stroke="#e2e2e2" stroke-width="0.35">0</text>
<text transform="translate(61.4 614.8) rotate(-48.5)" fill="#e2e2e2" font-size="10.6" text-anchor="end">12:10</text>
<text transform="translate(111.2 614.8) rotate(-48.5)" fill="#e2e2e2" font-size="10.6" text-anchor="end">12:11</text>
<text transform="translate(161.0 614.8) rotate(-48.5)" fill="#e2e2e2" font-size="10.6" text-anchor="end">12:13</text>
<text transform="translate(210.8 614.8) rotate(-48.5)" fill="#e2e2e2" font-size="10.6" text-anchor="end">12:15</text>
<text transform="translate(260.6 614.8) rotate(-48.5)" fill="#e2e2e2" font-size="10.6" text-anchor="end">12:16</text>
<text transform="translate(310.4 614.8) rotate(-48.5)" fill="#e2e2e2" font-size="10.6" text-anchor="end">12:18</text>
<text transform="translate(360.2 614.8) rotate(-48.5)" fill="#e2e2e2" font-size="10.6" text-anchor="end">12:19</text>
<text transform="translate(410.0 614.8) rotate(-48.5)" fill="#e2e2e2" font-size="10.6" text-anchor="end">12:21</text>
<text transform="translate(459.8 614.8) rotate(-48.5)" fill="#e2e2e2" font-size="10.6" text-anchor="end">12:23</text>
<text transform="translate(509.6 614.8) rotate(-48.5)" fill="#e2e2e2" font-size="10.6" text-anchor="end">12:24</text>
<text transform="translate(559.5 614.8) rotate(-48.5)" fill="#e2e2e2" font-size="10.6" text-anchor="end">12:27</text>
<text transform="translate(609.3 614.8) rotate(-48.5)" fill="#e2e2e2" font-size="10.6" text-anchor="end">12:29</text>
<text transform="translate(659.1 614.8) rotate(-48.5)" fill="#e2e2e2" font-size="10.6" text-anchor="end">12:30</text>
<text transform="translate(708.9 614.8) rotate(-48.5)" fill="#e2e2e2" font-size="10.6" text-anchor="end">12:32</text>
<text transform="translate(758.7 614.8) rotate(-48.5)" fill="#e2e2e2" font-size="10.6" text-anchor="end">12:34</text>
<text transform="translate(808.5 614.8) rotate(-48.5)" fill="#e2e2e2" font-size="10.6" text-anchor="end">12:35</text>
<text transform="translate(858.3 614.8) rotate(-48.5)" fill="#e2e2e2" font-size="10.6" text-anchor="end">12:37</text>
<text transform="translate(908.1 614.8) rotate(-48.5)" fill="#e2e2e2" font-size="10.6" text-anchor="end">12:39</text>
<text transform="translate(957.9 614.8) rotate(-48.5)" fill="#e2e2e2" font-size="10.6" text-anchor="end">12:40</text>
<text transform="translate(28.2 478) rotate(-90)" fill="#e6e6e6" text-anchor="middle">Leistung [kW]</text>
<text transform="translate(995.8 478.5) rotate(90)" fill="#e6e6e6" text-anchor="middle">SoC [%]</text>
</svg>
<div class="row th" style="top:644px"></div>
<div class="row tr" style="top:680px"></div>
<hr class="sep">
<div class="row th" style="top:745px;height:35.5px"></div>
<div class="row tr" style="top:780.5px;height:34px"></div>
<div class="tx lb" id="l1" style="left:379.03px;top:284.08px;letter-spacing:0.173px">Ladeleistung:</div>
<div class="tx lb" id="l2" style="left:547.72px;top:284.08px;letter-spacing:0.855px">2,53 kW</div>
<div class="tx hb" id="h11" style="left:70.65px;top:649.08px;letter-spacing:1.125px">Ladepunkt</div>
<div class="tx hb" id="h12" style="left:302.00px;top:649.08px;letter-spacing:1.012px">Ladeparameter</div>
<div class="tx hb" id="h13" style="left:638.35px;top:649.08px;letter-spacing:1.275px">geladen</div>
<div class="tx hb" id="h14" style="left:916.40px;top:649.08px;letter-spacing:-0.450px">SoC</div>
<div class="tx gb" id="r11" style="left:58.68px;top:685.28px;letter-spacing:0.337px">SAFTLaden</div>
<div class="tx rt" id="r12a" style="left:302.78px;top:684.97px;letter-spacing:0.090px">2,53 kW</div>
<div class="tx rt" id="r12b" style="left:420.28px;top:684.97px;letter-spacing:0.960px">11 A</div>
<div class="tx rt" id="r13" style="left:588.15px;top:684.97px;letter-spacing:0.506px">4,3 kWh / 27,5 km</div>
<div class="tx rt" id="r14" style="left:898.62px;top:684.97px;letter-spacing:0.360px">49 %</div>
<div class="tx hb" id="h21" style="left:99.75px;top:749.88px;letter-spacing:0.787px">Gerät</div>
<div class="tx hb" id="h22" style="left:328.70px;top:749.88px;letter-spacing:1.013px">Verbrauch</div>
<div class="tx hb" id="h23" style="left:601.65px;top:749.88px;letter-spacing:1.800px">Modus</div>
<div class="tx hb" id="h24" style="left:851.45px;top:749.88px;letter-spacing:0.900px">Laufzeit</div>
<div class="tx gb" id="r21" style="left:61.35px;top:784.58px;letter-spacing:0.900px">OchsnerIWP</div>
<div class="tx rt" id="r22" style="left:364.00px;top:784.27px;letter-spacing:0.450px">0 W</div>
<div class="tx rt" id="r23" style="left:586.30px;top:784.27px;letter-spacing:1.012px">Automatik</div>
<div class="tx rt" id="r24" style="left:837.50px;top:784.27px;letter-spacing:0.800px">4 H 42 Min</div>
<span class="circ" style="position:absolute;left:394.3px;top:691.2px;margin:0">1</span>
<span class="abs" style="left:187.3px;top:691.6px;line-height:0"><svg class="ico" width="13.7" height="18.2" viewBox="0 0 384 512"><path fill="#006618" d="M320 32a32 32 0 0 0-64 0v96h64zm48 128H16a16 16 0 0 0-16 16v32a16 16 0 0 0 16 16h16v32a160.070 160.070 0 0 0 128 156.800V512h64v-99.200A160.070 160.070 0 0 0 352 256v-32h16a16 16 0 0 0 16-16v-32a16 16 0 0 0-16-16zM128 32a32 32 0 0 0-64 0v96h64z"/></svg></span>
<span class="abs" style="left:956.7px;top:691.2px;line-height:0"><svg class="ico" width="18.9" height="18.9" viewBox="0 0 512 512"><path fill="#4a4a4a" d="M256.455 8c66.269.119 126.437 26.233 170.859 68.685l35.715-35.715C478.149 25.851 504 36.559 504 57.941V192c0 13.255-10.745 24-24 24H345.941c-21.382 0-32.090-25.851-16.971-40.971l41.750-41.750c-30.864-28.899-70.801-44.907-113.230-45.273-92.398-.798-170.283 73.977-169.484 169.442C88.764 348.009 162.184 424 256 424c41.127 0 79.997-14.678 110.629-41.556 4.743-4.161 11.906-3.908 16.368.553l39.662 39.662c4.872 4.872 4.631 12.815-.482 17.433C378.202 479.813 319.926 504 256 504 119.034 504 8.001 392.967 8 256.002 7.999 119.193 119.646 7.755 256.455 8z"/></svg></span>
</body>
</html>
